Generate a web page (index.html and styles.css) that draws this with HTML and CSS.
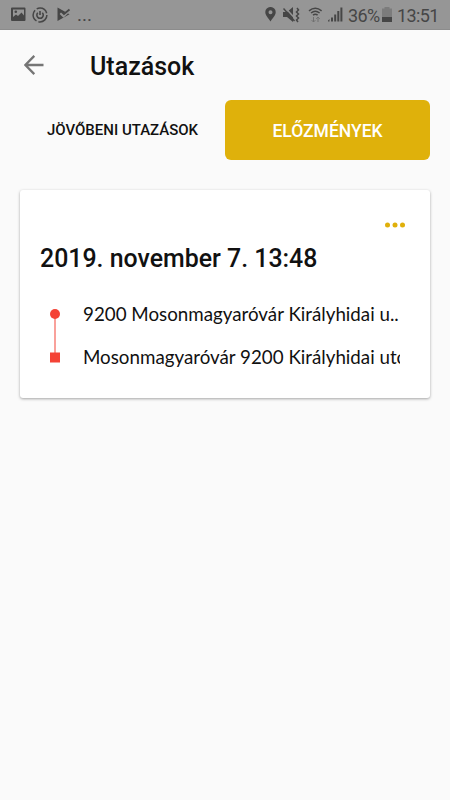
FILE: index.html
```html
<!DOCTYPE html>
<html lang="hu">
<head>
    <meta charset="UTF-8">
    <meta name="viewport" content="width=device-width, initial-scale=1.0">
    <title>Utazások</title>
    <link rel="stylesheet" href="styles.css">
</head>
<body>
    <div class="status-bar">
        <div class="status-left">
            <svg class="icon-image" width="15" height="15" viewBox="0 0 15 15">
                <path fill-rule="evenodd" d="M1 .5h12.500q1 0 1 1v11.500q0 1-1 1H1q-1 0-1-1V1.500q0-1 1-1zM2 2.500v7.500l3-2.500 2 1.500 3.500-3.500 2.500 3V2.500z"/>
                <circle cx="4.800" cy="4.800" r="1.300"/>
            </svg>
            <svg class="icon-sync" width="17" height="16" viewBox="0 0 17 16" fill="none">
                <circle cx="8" cy="8" r="6.900" stroke-width="1.500" stroke-dasharray="12.400 2.050"/>
                <path d="M5.800 5.800a3.200 3.200 0 1 0 4.500 0M8 4v4" stroke-width="1.600"/>
            </svg>
            <svg class="icon-play" width="14" height="15" viewBox="0 0 14 15">
                <path d="M.5.500l12 6.800-12 6.800z"/>
                <path class="check" d="M3.500 6l3 3 6.500-6.500" fill="none"/>
                <path class="tick" d="M4 4l3 3 5.500-4.500" fill="none"/>
            </svg>
            <span class="more">...</span>
        </div>
        <div class="status-right">
            <svg class="icon-pin" width="12" height="15" viewBox="0 0 12 15">
                <path fill-rule="evenodd" d="M5.500 0a5 5 0 0 1 5.200 5.200C10.700 8.500 7.500 11 5.500 14.500 3.500 11 .3 8.500.3 5.200A5 5 0 0 1 5.500 0zm0 3.200a2 2 0 1 0 0 4 2 2 0 0 0 0-4z"/>
            </svg>
            <svg class="icon-mute" width="17" height="16" viewBox="0 0 17 16">
                <path d="M0 5h4l6-5v15L4 10H0z"/>
                <path class="slash" d="M2 .5l10.500 11.500" fill="none"/>
                <path class="line" d="M.5 1.500l11 12.500" fill="none"/>
                <path class="wave" d="M14 1l1.500 2-2 2 2 2-2 2 2 2-2 2 1.500 2" fill="none"/>
            </svg>
            <svg class="icon-wifi" width="15" height="16" viewBox="0 0 15 16" fill="none">
                <path d="M1 3.800q6.300-5 12.600 0M3 6q4.300-3.400 8.600 0M5 8.200q2.300-1.800 4.600 0" stroke-width="1.500"/>
                <path class="arrows" d="M5.500 10v5M3.700 13.200l1.800 1.800 1.800-1.800M10 15v-5M8.200 11.800L10 10l1.800 1.800"/>
            </svg>
            <svg class="icon-signal" width="15" height="15" viewBox="0 0 15 15">
                <path d="M0 14.500v-1l1.500-1.500v2.500zM3 10.500h2v4H3zM6.200 7.500h2v7h-2zM9.300 4h2v10.500h-2zM12.400.500h2v14h-2z"/>
            </svg>
            <span class="percent">36%</span>
            <svg class="icon-battery" width="10" height="15" viewBox="0 0 10 15">
                <path class="empty" d="M0 1.500h2.500V0h5v1.500H10V10H0z"/>
                <path d="M0 10h10v5H0z"/>
            </svg>
            <span class="clock">13:51</span>
        </div>
    </div>

    <div class="header">
        <svg class="back" width="20" height="20" viewBox="0 0 20 20">
            <path d="M19.500 10H1.800M10.300.900L1.400 10l8.900 9.100"/>
        </svg>
        <h1>Utazások</h1>
    </div>

    <div class="tabs">
        <div class="tab"><span>JÖVŐBENI UTAZÁSOK</span></div>
        <div class="tab active"><span>ELŐZMÉNYEK</span></div>
    </div>

    <div class="card">
        <svg class="menu" width="20" height="6" viewBox="0 0 20 6">
            <circle cx="2.500" cy="3" r="2.500"/>
            <circle cx="10" cy="3" r="2.500"/>
            <circle cx="17.500" cy="3" r="2.500"/>
        </svg>
        <h2>2019. november 7. 13:48</h2>
        <div class="route">
            <svg class="route-line" width="10" height="54" viewBox="0 0 10 54">
                <path class="line" d="M5 5v39"/>
                <circle cx="5" cy="5" r="5"/>
                <rect y="43.500" width="10" height="10"/>
            </svg>
            <div class="stops">
                <div class="stop">9200 Mosonmagyaróvár Királyhidai u..</div>
                <div class="stop">Mosonmagyaróvár 9200 Királyhidai utca</div>
            </div>
        </div>
    </div>
</body>
</html>
```
FILE: styles.css
```css
body {
    margin: 0;
    min-height: 100vh;
    font-family: Roboto, sans-serif;
    background-color: #fafafa;
    color: #111;
}
svg {
    display: block;
    flex: none;
}
h1, h2 {
    margin: 0;
    font-weight: 500;
    white-space: nowrap;
}
.status-bar {
    display: flex;
    justify-content: space-between;
    box-sizing: border-box;
    height: 30px;
    padding: 0 11px;
    background-color: #969696;
    border-bottom: 1px solid #8c8c8c;
    color: #464646;
    fill: #464646;
    stroke: none;
}
.status-left, .status-right {
    display: flex;
    align-items: center;
}
.icon-sync, .icon-wifi {
    stroke: #464646;
}
.icon-sync {
    margin-left: 6px;
}
.icon-play {
    margin-left: 8px;
}
.check {
    stroke: #969696;
    stroke-width: 2.5;
}
.tick {
    stroke: #464646;
    stroke-width: 1.8;
}
.more {
    margin-left: 6px;
    font-size: 19px;
}
.icon-mute {
    margin-left: 6px;
}
.slash {
    stroke: #969696;
    stroke-width: 1.5;
}
.icon-mute .line, .wave {
    stroke: #464646;
    stroke-width: 1.5;
}
.icon-wifi {
    margin-left: 8px;
}
.arrows {
    stroke: #707070;
}
.icon-signal {
    margin-left: 5px;
}
.percent, .clock {
    font-size: 18px;
    line-height: 30px;
    letter-spacing: -0.6px;
    padding-top: 2px;
}
.percent {
    width: 32px;
    margin-left: 5px;
}
.icon-battery {
    margin-left: 2px;
}
.clock {
    width: 42px;
    margin-left: 5px;
}
.empty {
    fill: #7c7c7c;
}
.header {
    display: flex;
    align-items: center;
    height: 70px;
    padding-left: 24px;
}
.back {
    fill: none;
    stroke: #757575;
    stroke-width: 2.3;
}
.header h1 {
    margin-left: 46px;
    padding-top: 2px;
    font-size: 25px;
}
.tabs {
    display: flex;
    margin: 0 20px;
}
.tab {
    display: flex;
    align-items: center;
    justify-content: center;
    width: 205px;
    height: 60px;
    border-radius: 6px;
    font-size: 15px;
    font-weight: 500;
    white-space: nowrap;
}
.tab.active {
    padding-top: 2px;
    height: 58px;
    background-color: #dfb10b;
    color: #fff;
    font-size: 17.5px;
}
.card {
    box-sizing: border-box;
    height: 208px;
    margin: 30px 20px 0;
    padding: 32px 30px 0 20px;
    background-color: #fff;
    border-radius: 3px;
    box-shadow: 0 1px 3px rgba(0, 0, 0, 0.35);
}
.menu {
    margin-left: 345px;
    fill: #e0b00b;
}
.card h2 {
    margin-top: 16px;
    font-size: 24.9px;
    line-height: 30px;
}
.route {
    display: flex;
    margin-top: 35px;
    padding-left: 10px;
}
.route-line {
    fill: #f44336;
}
.route-line .line {
    stroke: #f9a19b;
    stroke-width: 2;
}
.stops {
    flex: 1;
    min-width: 0;
    margin: -17px 0 0 23px;
}
.stop {
    height: 43px;
    overflow: hidden;
    font-family: Lato, sans-serif;
    font-size: 18.75px;
    line-height: 43px;
    white-space: nowrap;
}
```
